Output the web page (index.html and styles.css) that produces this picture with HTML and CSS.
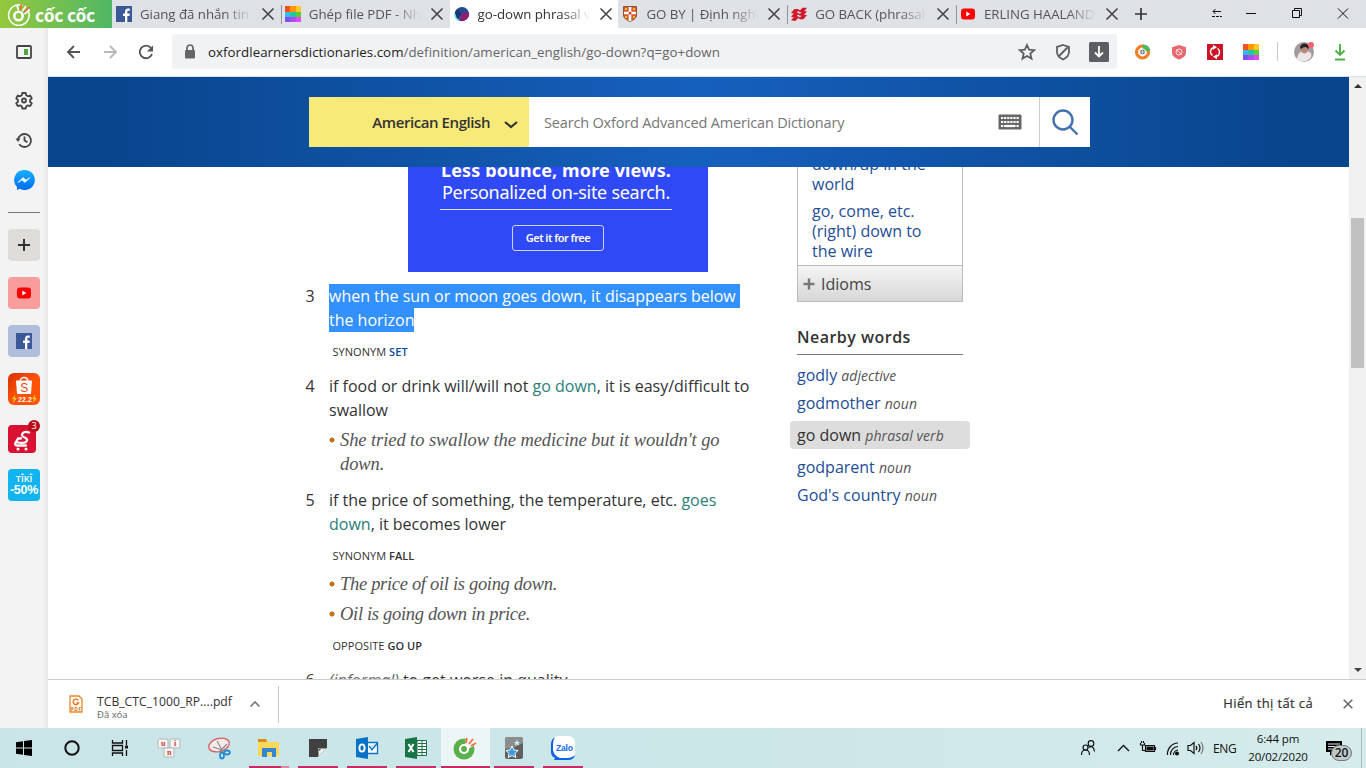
FILE: index.html
```html
<!DOCTYPE html>
<html lang="vi">
<head>
<meta charset="utf-8">
<title>go-down phrasal verb</title>
<link rel="stylesheet" href="styles.css">
</head>
<body>
<svg width="0" height="0" class="defs">
  <defs>
    <linearGradient id="msg" x1="0" y1="0" x2="0" y2="1"><stop offset="0" stop-color="#19b0ff"/><stop offset="1" stop-color="#006cf0"/></linearGradient>
    <symbol id="close" viewBox="0 0 14 14"><path d="M1.5 1.5l11 11M12.5 1.5l-11 11" stroke="currentColor" stroke-width="1.6" fill="none"/></symbol>
    <symbol id="rainbow" viewBox="0 0 16 16"><path fill="#f4511e" d="M0 0h5v6H0z"/><path fill="#ff9800" d="M5 0h6v6H5z"/><path fill="#ffc928" d="M11 0h5v6h-5z"/><path fill="#3bb8ee" d="M0 6h5v5H0z"/><path fill="#1fc9a5" d="M5 6h6v5H5z"/><path fill="#58cf34" d="M11 6h5v5h-5z"/><path fill="#7b4ff2" d="M0 11h5v5H0z"/><path fill="#b04cf4" d="M5 11h6v5H5z"/><path fill="#e34bf0" d="M11 11h5v5h-5z"/></symbol>
    <symbol id="youtube" viewBox="0 0 16 16"><rect x="1" y="2.5" width="14" height="11" rx="3" fill="#f00"/><path d="M6.3 5.6v4.8l4-2.4z" fill="#fff"/></symbol>
    <symbol id="facebook" viewBox="0 0 16 16"><path fill="#3b5998" d="M0 0h16v16H0z"/><path fill="#fff" d="M9 16V10H7V7.5h2V6c0-2.4 1.2-3.5 3.3-3.5h1.5v2.3h-1.2c-1 0-1.3.4-1.3 1.3v1.4h2.5L13.4 10h-2.1v6z"/></symbol>
  </defs>
</svg>

<header class="tabstrip">
  <div class="brand">
    <svg width="24" height="24" viewBox="0 0 24 24"><g fill="none" stroke="#fff"><path d="M15.5 3.5A10.3 10.3 0 1 0 21.500 9.500" stroke-width="1.500"/><circle cx="11.500" cy="14" r="4.200" stroke-width="2.600"/><path d="M11.500 8L10 3.500M15.500 9L19 4M17.500 12l5-4.500" stroke-width="1.800"/></g><path d="M14.500 2l-1.500 6M17 10.500l5.500-5.500" stroke="#f2633e" stroke-width="1.600"/></svg>
    <span class="brand-name">cốc cốc</span>
  </div>
  <div class="tab"><svg class="fav"><use href="#facebook"/></svg><span class="tab-title">Giang đã nhắn tin</span><svg class="x"><use href="#close"/></svg></div>
  <div class="tab sep"><svg class="fav"><use href="#rainbow"/></svg><span class="tab-title">Ghép file PDF - Nh</span><svg class="x"><use href="#close"/></svg></div>
  <div class="tab active"><svg class="fav" viewBox="0 0 16 16"><circle cx="8" cy="8" r="7" fill="#234a93"/><path d="M1.2 6A7 7 0 0 0 5 14.3L8 8z" fill="#32c0e9"/><path d="M8 8L2.7 3.2A7 7 0 0 0 5 14.3c0-2 1-4 3-6.3z" fill="#153673"/><path d="M8 7l6.8-1A7 7 0 0 1 5 14.3z" fill="#8e1e72"/><path d="M1 8a7 7 0 0 0 4 6.3" stroke="#5ed6f4" stroke-width="1.4" fill="none"/></svg><span class="tab-title">go-down phrasal v</span><svg class="x"><use href="#close"/></svg></div>
  <div class="tab"><svg class="fav" viewBox="0 0 16 16"><path fill="#d65b26" stroke="#813b24" stroke-width=".8" d="M1.500.5h13v8.300c0 3.400-3 5.200-6.500 6.700-3.500-1.500-6.500-3.300-6.500-6.700z"/><path stroke="#fff" stroke-width="2.600" d="M8 1v14M2 7h12"/><path fill="#f2bb42" d="M3 2h2v2H3zM11 2h2v2h-2zM3 10h2v2H3zM11 10h2v2h-2z"/><path fill="#c43621" d="M6.800 6h2.500v2.500H6.800z"/></svg><span class="tab-title">GO BY | Định nghĩ</span><svg class="x"><use href="#close"/></svg></div>
  <div class="tab sep"><svg class="fav" viewBox="0 0 18 16"><path d="M0 7L4 2.500h4l2 1.500 3-3h5l-4 5h-4L8 4.500 5 8zM0 11l4-4.500h4L10 8l3-3h5l-4 5h-4L8 8.500 5 12zM0 15l4-4.500h4l2 1.500 3-3h5l-4 5h-4l-2-1.500L5 16z" fill="#d3172b"/></svg><span class="tab-title">GO BACK (phrasal</span><svg class="x"><use href="#close"/></svg></div>
  <div class="tab sep"><svg class="fav"><use href="#youtube"/></svg><span class="tab-title">ERLING HAALAND</span><svg class="x"><use href="#close"/></svg></div>
  <div class="newtab"><svg width="14" height="14" viewBox="0 0 14 14"><path d="M7 1v12M1 7h12" stroke="#333" stroke-width="1.700"/></svg></div>
  <div class="winctl">
    <svg width="150" height="28" viewBox="1206 0 150 28" fill="none" stroke="#111"><path d="M1213 11.500h8M1215.500 9l-2.500 2.500 2.500 2.500"/><path d="M1212 16.500h10" stroke-dasharray="3 1"/><path d="M1246 13.500h10"/><path d="M1292.500 10.500h7v7h-7zM1294.500 10.500v-2h7v7h-2"/><path d="M1338 8.500l10 10M1348 8.500l-10 10"/></svg>
  </div>
</header>

<div class="window">
  <aside class="rail">
    <svg width="48" height="140" viewBox="0 28 48 140" fill="none" stroke="#444" stroke-width="1.800"><rect x="17" y="46" width="14" height="12" rx="1"/><path d="M24 49h4v6h-4z" fill="#4aa834" stroke="none"/>
      <path d="M22.300 93h3.400l.5 2.300 1.800 1 2.200-.8 1.600 2.900-1.700 1.600-.1 1.700 1.800 1.500-1.700 2.900-2.200-.7-1.600.8-.6 2.300h-3.400l-.6-2.300-1.600-.8-2.200.7-1.700-2.900 1.800-1.500-.1-1.700-1.700-1.600 1.600-2.900 2.200.8 1.800-1z" stroke-linejoin="round"/><circle cx="24" cy="100.500" r="2"/>
      <path d="M19.200 144.300A6.500 6.500 0 1 0 18 140"/><path d="M15.500 138.500h5l-2.500 3.500z" fill="#444" stroke="none"/><path d="M24.500 136.500v4l3 1.800"/></svg>
    <svg width="22" height="22" viewBox="0 0 22 22"><path d="M11 1a10 10 0 0 0-7 17v3l3-1.300A10 10 0 1 0 11 1z" fill="url(#msg)"/><path d="M5 13.500l5-5 3 2.500 4-2.500-5 5-3-2.500z" fill="#fff" stroke="#fff" stroke-width=".6"/></svg>
    <hr>
    <div class="tile add"><svg width="14" height="14" viewBox="0 0 14 14"><path d="M7 1v12M1 7h12" stroke="#333" stroke-width="2"/></svg></div>
    <div class="tile yt"><svg width="16" height="16"><use href="#youtube"/></svg></div>
    <div class="tile fb"><svg width="16" height="16"><use href="#facebook"/></svg></div>
    <div class="tile shopee"><svg width="32" height="32" viewBox="0 0 32 32"><path d="M12 9c0-6 8-6 8 0" fill="none" stroke="#fff" stroke-width="1.400"/><path d="M8 7.500h16l-1 13.500H9z" fill="#fff"/><text x="12.300" y="19" font-size="12" fill="#f0431b">S</text><path d="M7 22l-3 4h2l-1 4 4-5H7zM27 22l-3 4h2l-1 4 4-5h-2z" fill="#ffc928"/><text x="10" y="28.500" font-size="7" font-weight="bold" fill="#fff" textLength="14">22.2</text></svg></div>
    <div class="tile sendo"><svg width="28" height="28" viewBox="0 0 28 28"><path d="M21 7.500c-4-1.500-7 0-7 2.500 0 3 6 2 5 5.500-1 3-7 2.500-11 1.500M8 17c-2 3 0 3.500 2 3.500h8M8 17l2-3.500h3" fill="none" stroke="#fff" stroke-width="2.300" stroke-linecap="round" stroke-linejoin="round"/><circle cx="10" cy="24" r="1.500" fill="#fff"/><circle cx="18" cy="24" r="1.500" fill="#fff"/></svg><b>3</b></div>
    <div class="tile tiki"><span>TÎKÎ</span><strong>-50%</strong></div>
  </aside>

  <main class="browser">
    <div class="toolbar">
      <svg width="124" height="48" viewBox="48 28 124 48" fill="none" stroke="#555" stroke-width="1.900"><path d="M80 52H69M74 46l-6 6 6 6"/><path d="M104 52h11M110 46l6 6-6 6" stroke="#b9b9b9"/><path d="M151 48a6.300 6.300 0 1 0 1 6"/><path d="M153 45.500v6h-6z" fill="#555" stroke="none"/></svg>
      <div class="omnibox">
        <svg width="12" height="16" viewBox="0 0 12 16"><path d="M3 6V4a3 3 0 0 1 6 0v2" fill="none" stroke="#666" stroke-width="1.700"/><rect x="1" y="6" width="10" height="8.500" rx="1" fill="#666"/></svg>
        <span class="url"><i>oxfordlearnersdictionaries.com</i>/definition/american_english/go-down?q=go+down</span>
        <svg width="98" height="34" viewBox="1017 35 98 34" fill="none" stroke="#5b5e62" stroke-width="1.800"><path d="M1027 45l2.100 4.700 5.100.5-3.900 3.400 1.200 5-4.500-2.600-4.500 2.600 1.200-5-3.900-3.400 5.100-.5z"/><path d="M1063 45l6 2v5c0 4-3 6-6 7.500-3-1.500-6-3.500-6-7.500v-5zM1058.500 56.500l9-9"/><rect x="1089" y="42" width="20" height="20" rx="1.500" fill="#5b5e62" stroke="none"/><path d="M1099 46v10M1095 52.500l4 4 4-4" stroke="#fff"/></svg>
      </div>
      <svg width="249" height="48" viewBox="1117 28 249 48" fill="none"><circle cx="1142.500" cy="52" r="6" stroke="#f08026" stroke-width="3.200"/><path d="M1142.500 44.500a8 8 0 0 1 8 6l-4 1-4-3z" fill="#55b75b"/><circle cx="1142.500" cy="52" r="3" fill="#687078" stroke="#fff"/><path d="M1142.500 49.500v5M1140 52h5" stroke="#fff" stroke-width=".6"/>
      <path d="M1179 45l7 2.300v4.700c0 4-3 6-7 7.500-4-1.500-7-3.500-7-7.500v-4.700z" fill="#e8686e"/><circle cx="1179" cy="52" r="3" stroke="#fff" stroke-width=".8"/><path d="M1177 50l4 4" stroke="#fff" stroke-width=".8"/>
      <path fill="#cb1527" d="M1207 44h16v16h-16z"/><path d="M1212.500 55.500a4.500 4.500 0 0 1 1-8M1217.500 48.500a4.500 4.500 0 0 1-1 8" stroke="#fff" stroke-width="1.400"/><path d="M1213 44.800l4 2.500-4 2.500zM1217 54.200v5l-4-2.500z" fill="#fff"/>
      <use href="#rainbow" x="1243" y="44" width="16" height="16"/><path d="M1277.500 42v19" stroke="#c7c9cc"/>
      <circle cx="1304" cy="52" r="10" fill="#a39a9d"/><path d="M1297 59c1-5 2-7 6-8h4c4 1 5 3 4 6-3 5-10 6-14 2z" fill="#ece6e6"/><path d="M1301 47h7v4q-3.500 5-7 0z" fill="#b8887b"/><path d="M1300 48c0-6 9-6 9 0l-1 1q-1-2-3-2t-4 2z" fill="#252125"/><circle cx="1311" cy="45" r="3" fill="#f46371"/><path d="M1340 44v10M1335.500 50.500l4.500 4.500 4.500-4.500M1335 59.500h10" stroke="#4faf46" stroke-width="1.900"/></svg>
    </div>

    <div class="viewport">
      <div class="page">
        <div class="oald-head">
          <div class="dict"><span>American English</span><svg width="14" height="9" viewBox="0 0 14 9"><path d="M1 2l6 5 6-5" fill="none" stroke="#333" stroke-width="2.200"/></svg></div>
          <div class="search"><span>Search Oxford Advanced American Dictionary</span><svg width="24" height="16" viewBox="0 0 24 16"><rect x=".5" y=".5" width="23" height="15" rx="1" fill="#666"/><path d="M3 4h18M3 8h18M3 12h18" stroke="#fff" stroke-width="2.200" stroke-dasharray="2.200 .9"/><path d="M7 12h10" stroke="#fff" stroke-width="2.200"/></svg></div>
          <div class="go"><svg width="28" height="28" viewBox="0 0 28 28" fill="none" stroke="#4470ae" stroke-width="2.400"><circle cx="12" cy="12" r="9.500"/><path d="M18.500 18.500l8 8"/></svg></div>
        </div>
        <div class="content">
          <div class="entry">
            <div class="ad"><b>Less bounce, more views.</b><span>Personalized on-site search.</span><hr><em>Get it for free</em></div>
            <div class="sense s3"><span class="num">3</span><p><mark>when the sun or moon goes down, it disappears below </mark><br><mark>the horizon</mark></p></div>
            <div class="xref x3">SYNONYM <b class="link">SET</b></div>
            <div class="sense"><span class="num">4</span><p>if food or drink will/will not <a>go down</a>, it is easy/difficult to<br>swallow</p></div>
            <ul class="ex"><li>She tried to swallow the medicine but it wouldn't go<br>down.</li></ul>
            <div class="sense"><span class="num">5</span><p>if the price of something, the temperature, etc. <a>goes<br>down</a>, it becomes lower</p></div>
            <div class="xref">SYNONYM <b>FALL</b></div>
            <ul class="ex tight"><li>The price of oil is going down.</li><li>Oil is going down in price.</li></ul>
            <div class="xref">OPPOSITE <b>GO UP</b></div>
            <div class="sense"><span class="num">6</span><p><i>(informal)</i> to get worse in quality</p></div>
          </div>
          <div class="side">
            <div class="results">
              <p>down/up in the<br>world</p>
              <p>go, come, etc.<br>(right) down to<br>the wire</p>
              <div class="idioms"><svg width="12" height="12" viewBox="0 0 12 12"><path d="M6 .5v11M.5 6h11" stroke="#777" stroke-width="2.400"/></svg>Idioms</div>
            </div>
            <h3>Nearby words</h3>
            <ul class="nearby">
              <li>godly <i>adjective</i></li><li>godmother <i>noun</i></li><li class="cur">go down <i>phrasal verb</i></li><li>godparent <i>noun</i></li><li>God's country <i>noun</i></li>
            </ul>
          </div>
        </div>
      </div>
      <div class="scroll"><i class="up"></i><i class="thumb"></i><i class="down"></i></div>
    </div>

    <div class="shelf">
      <svg class="pdf" width="14" height="18" viewBox="0 0 14 18"><path d="M1 1h9l3 3v13H1z" fill="#fff9f0" stroke="#e28a2e" stroke-width="1.300"/><path d="M9.300 5.300A2.800 2.800 0 1 0 9.500 8H7.500" fill="none" stroke="#e8702a" stroke-width="1.300"/><text x="1.800" y="15.500" font-size="5" font-weight="bold" fill="#d97917" textLength="10.400">PDF</text></svg>
      <div class="file"><span>TCB_CTC_1000_RP....pdf</span><small>Đã xóa</small></div>
      <svg class="chev" width="12" height="8" viewBox="0 0 12 8"><path d="M1.500 6.500L6 2l4.500 4.500" fill="none" stroke="#777" stroke-width="1.700"/></svg>
      <span class="showall">Hiển thị tất cả</span>
      <svg class="shelf-x" width="12" height="12" viewBox="0 0 14 14"><path d="M2 2l10 10M12 2L2 12" stroke="#6a6a6a" stroke-width="1.900"/></svg>
    </div>
  </main>
</div>

<footer class="taskbar">
  <div class="task start"><svg width="16" height="16" viewBox="0 0 16 16"><path d="M0 2.300L7 1.300v6.200H0zM8 1.100L16 0v7.500H8zM0 8.500h7v6.200l-7-1zM8 8.500h8V16l-8-1.100z"/></svg></div>
  <div class="task start"><svg width="16" height="16" viewBox="0 0 16 16"><circle cx="8" cy="8" r="6.700" fill="none" stroke="#111" stroke-width="2"/></svg></div>
  <div class="task start"><svg width="18" height="16" viewBox="0 0 18 16" fill="none" stroke="#111" stroke-width="1.300"><path d="M1.500 0v3h10V0M1.500 16v-3h10v3M1.500 5.500h10v5h-10zM15.500 0v5M15.500 10v6"/><path d="M14 5.500h3v3h-3z" fill="#111" stroke="none"/></svg></div>
  <div class="task pinned"><svg width="24" height="20" viewBox="0 0 24 20"><g fill="#f5f5f5" stroke="#b5b5b5"><rect x="1" y="1" width="10" height="9" rx="1"/><rect x="13" y="1" width="10" height="9" rx="1"/><rect x="7" y="10" width="10" height="9" rx="1"/></g><g fill="#c63d39" font-size="8" font-weight="bold" font-family="Liberation Serif,serif"><text x="4" y="7.500">u</text><text x="17" y="7.500">i</text><text x="10" y="17">n</text></g></svg></div>
  <div class="task pinned"><svg width="24" height="24" viewBox="0 0 24 24"><ellipse cx="12" cy="9" rx="10.500" ry="6.500" transform="rotate(-15 12 9)" fill="#f4e9eb" stroke="#db5a62" stroke-width="1.300"/><path d="M10 5l6 11M20 8l-7 7M6 11l9 3" stroke="#888" stroke-width="1.100"/><g fill="none" stroke="#278acf" stroke-width="1.800"><ellipse cx="15" cy="19.500" rx="2" ry="3"/><ellipse cx="20" cy="16.500" rx="2.800" ry="2"/></g></svg></div>
  <div class="task open two"><svg width="24" height="20" viewBox="0 0 24 20"><path d="M1 1h8l2 3h11v14H1z" fill="#ffd75b"/><path d="M1 1h8l1 3H1z" fill="#d88d1b"/><path d="M5 19v-9h14v9h-4v-5h-5v5z" fill="#3386d0"/></svg></div>
  <div class="task open"><svg width="18" height="18" viewBox="0 0 18 18"><path d="M0 0h18v18H0z" fill="#404040"/><path d="M9 18V9h9v9z" fill="#d0e8ea"/><path d="M9.500 17.500V9.500h8z" fill="#f4f4f4"/><path d="M9.500 9.500h8l-8 8z" fill="#404040"/><path d="M10 17v-5l2-2h5z" fill="#eee"/></svg></div>
  <div class="task open"><svg width="24" height="24" viewBox="0 0 24 24"><path fill="#0a72c6" d="M1 3l12-2v22L1 21z"/><path d="M13 6.500h9.500v11H13M14 10l3 4 5.500-7" fill="#fff" stroke="#0a72c6" stroke-width="1.300"/><ellipse cx="7" cy="12" rx="2.600" ry="3.600" fill="none" stroke="#fff" stroke-width="1.900"/></svg></div>
  <div class="task open"><svg width="24" height="24" viewBox="0 0 24 24"><path fill="#187346" d="M1 3l12-2v22L1 21z"/><path d="M13 4.500h9.500v15H13z" fill="#fff" stroke="#187346"/><path d="M14 7.500h8M14 10.500h8M14 13.500h8M14 16.500h8M18 5v14" stroke="#187346"/><path d="M4.500 8l5 8M9.500 8l-5 8" stroke="#fff" stroke-width="2"/></svg></div>
  <div class="task open current"><svg width="24" height="24" viewBox="0 0 24 24"><circle cx="11" cy="13" r="10.500" fill="#5bb04b"/><path d="M12 10L13 0l4 2 3 3 4 3-9 5z" fill="#f4f9f8"/><circle cx="11" cy="13" r="4" fill="#5bb04b" stroke="#fff" stroke-width="2.200"/><path d="M13 7l1-5M16 8l4-5M18 10l5-3" stroke="#f36c3d" stroke-width="1.800"/></svg></div>
  <div class="task open"><svg width="20" height="24" viewBox="0 0 20 24"><rect x="1" y="1" width="18" height="22" rx="2.500" fill="#5f5f5f"/><path d="M1 13Q11 12 19 7V3.500Q19 1 16.500 1h-13Q1 1 1 3.500z" fill="#8d8d8d"/><path d="M8 10l2 4 4 .5-3 3 .8 4L8 19.500 4.200 21.500l.8-4-3-3L6 14z" fill="#399be0" stroke="#fff"/><path d="M13 3.500l1 2.500h2l-1.500 1.500.5 2-2-1-2 1 .5-2L10 6h2z" fill="#d7e9f5"/></svg></div>
  <div class="task open"><svg width="24" height="24" viewBox="0 0 24 24"><path d="M7 0h10q7 0 7 7v10q0 7-7 7H3q1-1 1-2-4-2-4-7V7Q0 0 7 0z" fill="#fff"/><path d="M4 1Q0 3 0 8v8q0 4 4 6l-1 2h14q6 0 7-5-3 3-8 3H9q-6-2-7-8V8q0-4 2-7z" fill="#0d62e8"/><text x="5" y="14.500" font-size="8.500" font-weight="bold" fill="#126af0" textLength="17">Zalo</text></svg></div>
  <div class="tray">
    <svg width="126" height="40" viewBox="1077 728 126 40" fill="none" stroke="#111" stroke-width="1.200"><circle cx="1090" cy="743.500" r="2.800"/><circle cx="1084.500" cy="747.500" r="2.500"/><path d="M1080.500 755q0-5 4-5t4 5M1087.500 747.500q5-3 6 4"/><path d="M1117 751l5.500-5.500 5.500 5.500" stroke-width="1.400"/><path d="M1144.500 745.500h9v6h-9z"/><path d="M1146 747h6v3h-6z" fill="#111"/><path d="M1154.500 747v3M1139.500 743v2h4v-2M1140.500 741v2M1142.500 741v2M1141.500 745v5.500h3"/><path d="M1166.500 755A11 11 0 0 1 1177 743M1169.500 755a8 8 0 0 1 7.500-8.500M1172.500 755a5 5 0 0 1 4.500-5"/><circle cx="1176" cy="753.500" r="1.400" fill="#111"/><path d="M1187 745.500h2.500l3.500-3v11l-3.500-3H1187z"/><path d="M1195 746q1.700 2 0 4M1197.500 744q3 4 0 8" /><path d="M1200 742q4 6 0 12" stroke="#777"/></svg>
    <span class="eng">ENG</span>
    <div class="clock"><span>6:44 pm</span><span>20/02/2020</span></div>
    <div class="notif"><svg width="16" height="15" viewBox="0 0 16 15"><path d="M0 0h16v11H7l-3 4v-4H0z"/><path d="M2 3h12M2 5.500h12M2 8h8" stroke="#d5e9ea"/></svg><b>20</b></div>
    <i class="peek"></i>
  </div>
</footer>
</body>
</html>
```

FILE: styles.css
```css
* { box-sizing: border-box; }
body { margin: 0; width: 1366px; height: 768px; overflow: hidden; display: flex; flex-direction: column; background: #fff; font-family: "Open Sans", "Noto Sans", sans-serif; color: #333; }
svg { display: block; flex: none; }
.defs { position: absolute; }
p, ul, h3 { margin: 0; padding: 0; font-weight: normal; }
li { list-style: none; }

.tabstrip { height: 28px; display: flex; background: #dee1e6; flex: none; }
.brand { width: 112px; display: flex; align-items: center; gap: 4px; padding-left: 7px; background: linear-gradient(90deg, #95c83d, #50b765); }
.brand-name { font: bold 17.500px/26px "Noto Sans", sans-serif; color: #fff; letter-spacing: -.4px; padding-top: 2px; white-space: nowrap; }
.tab { width: 168.800px; display: flex; align-items: center; padding-left: 4px; color: #555; flex: none; }
.tab.sep { background: linear-gradient(#8f9296, #8f9296) 0 5px / 1px 19px no-repeat; }
.tab.active { background: #fff; color: #333; }
.fav { width: 16px; height: 16px; }
.tab-title { width: 118px; margin-left: 8px; font-size: 13.300px; letter-spacing: -.05px; line-height: 28px; white-space: nowrap; overflow: hidden; -webkit-mask-image: linear-gradient(90deg, #000 84px, transparent 112px); mask-image: linear-gradient(90deg, #000 84px, transparent 112px); }
.x { width: 14px; height: 14px; margin-left: 3px; color: #444; }
.newtab { padding: 7px 0 0 9px; flex: 1; }
.winctl { width: 160px; }

.window { height: 700px; display: flex; flex: none; }
.rail { width: 48px; background: linear-gradient(90deg, #f3f3f3 43px, #e8e8e8); display: flex; flex-direction: column; align-items: center; flex: none; }
.rail > svg:first-child { margin-bottom: 1px; }
.rail hr { width: 32px; height: 1px; margin: 21px 0 16px; border: 0; background: #777; }
.tile { width: 32px; height: 32px; margin-bottom: 16px; border-radius: 4px; display: flex; align-items: center; justify-content: center; flex: none; }
.add { background: #dfddda; }
.yt { background: #f89c9c; }
.fb { background: #b1bedb; }
.shopee { background: linear-gradient(135deg, #d73005, #ff5208 50%); font-family: "Liberation Sans", sans-serif; border-radius: 6px; }
.sendo { width: 28px; height: 28px; margin: 4px 4px 16px 0; background: #d91133; position: relative; }
.sendo b { position: absolute; top: -5px; right: -4px; width: 12px; height: 12px; border-radius: 50%; background: #b90c1b; color: #fff; font: 9px/12px "Open Sans", sans-serif; text-align: center; }
.tiki { flex-direction: column; background: #12b4ef; color: #fff; }
.tiki span { font-size: 9px; line-height: 11px; font-weight: 600; }
.tiki strong { font: bold 12.500px/13px "Liberation Sans", sans-serif; letter-spacing: -.3px; }

.browser { width: 1318px; display: flex; flex-direction: column; }
.toolbar { height: 49px; display: flex; flex: none; border-bottom: 1px solid #d7e3ee; }
.omnibox { width: 945px; height: 35px; margin-top: 6px; padding: 0 2px 0 12px; display: flex; align-items: center; background: #f1f2f4; border-radius: 3px; flex: none; }
.url { flex: 1; margin-left: 12px; font-size: 13.300px; letter-spacing: .04px; color: #666; white-space: nowrap; }
.url i { font-style: normal; color: #222; }

.viewport { height: 602px; display: flex; flex: none; }
.page { width: 1301px; display: flex; flex-direction: column; overflow: hidden; }
.oald-head { height: 90px; padding: 20px 0 20px 261px; display: flex; flex: none; background: linear-gradient(90deg, #09458d 0, #09458d 60px, #1660bd 50%, #09458d 1240px); position: relative; z-index: 1; }
.dict { width: 220px; background: #f7ea79; display: flex; align-items: center; justify-content: flex-end; padding-right: 11px; gap: 14px; font-size: 15px; letter-spacing: -.43px; font-weight: 600; white-space: nowrap; }
.dict svg { margin-top: 4px; }
.search { width: 510px; background: #fff; padding: 0 17px 0 15px; display: flex; align-items: center; justify-content: space-between; font-size: 14.500px; letter-spacing: -.17px; color: #777; }
.go { width: 51px; background: #fff; border-left: 1px solid #ccc; display: flex; align-items: center; justify-content: center; }
.content { height: 512px; display: flex; overflow: hidden; }
.entry { width: 459px; margin-left: 257px; flex: none; }
.ad { width: 300px; height: 105px; margin-left: 103px; padding: 0 36px 0 32px; background: #3049f6; color: #fff; display: flex; flex-direction: column; }
.ad b { font: bold 18px/24px "Noto Sans", sans-serif; letter-spacing: .13px; margin: -9px 0 0 1px; white-space: nowrap; }
.ad > span { font: 18px/20px "Noto Sans", sans-serif; letter-spacing: -.28px; margin-left: 2px; white-space: nowrap; }
.ad hr { width: 100%; height: 1px; border: 0; background: #dfe3ff; margin: 7px 0 15px; }
.ad em { width: 92px; height: 26px; margin-left: 72px; border: 1px solid #ccd3ff; border-radius: 3px; font: 600 10.500px/23px "Noto Sans", sans-serif; letter-spacing: -.5px; word-spacing: -.3px; letter-spacing: -.45px; text-align: center; font-size: 11px; }
.sense { display: flex; height: 48px; margin-top: 12px; font-size: 16px; line-height: 24px; white-space: nowrap; }
.num { width: 24px; padding-left: .5px; }
.sense a { color: #2b8079; }
.sense i { color: #666; }
mark { display: inline-block; height: 24px; background: #3390ff; color: #fff; white-space: pre; letter-spacing: -.015px; }
.sense p { width: 425px; }
.xref { height: 20px; margin: 10px 0 0 27.500px; font-size: 11px; letter-spacing: .05px; line-height: 20px; color: #333; white-space: nowrap; }
.xref b { font-weight: 600; }
.xref .link { color: #104a93; }
.ex { margin: 6px 0 0 24px; color: #555; font: italic 18.500px/24px "Liberation Serif", serif; letter-spacing: -.08px; white-space: nowrap; }
.ex li { padding-left: 11px; background: radial-gradient(circle at 3px 12px, #c4761b 2.300px, transparent 2.800px); }
.tight { letter-spacing: -.31px; }
.tight li + li { margin-top: 6px; }

.side { width: 180px; margin-left: 26px; font-size: 16px; }
.results { width: 166px; margin-left: 7px; height: 148px; padding: 0 0 0 14px; border: 1px solid #bbb; border-top: 0; color: #1d4e97; line-height: 20px; white-space: nowrap; }
.results p:first-child { margin-top: -13px; }
.results p + p { margin-top: 7px; }
.idioms { width: 164px; height: 36px; margin: 4px 0 0 -14px; padding-left: 5px; display: flex; align-items: center; gap: 6px; color: #444; background: linear-gradient(#f5f5f5, #d7d7d7); border-top: 1px solid #bbb; }
.side h3 { width: 166px; height: 34px; margin: 19px 0 6px 7px; border-bottom: 1px solid #777; font-size: 16px; letter-spacing: .48px; line-height: 32px; font-weight: 600; }
.nearby li { height: 28px; padding-left: 7px; line-height: 28px; color: #1d4e97; white-space: nowrap; }
.nearby i { font-size: 14px; letter-spacing: .07px; color: #555; }
.nearby .cur { margin: 4px 0 4px; background: #ddd; border-radius: 4px; color: #333; }
.scroll { width: 17px; background: #f1f1f1; display: flex; flex-direction: column; align-items: center; }
.up, .down { border: 4px solid transparent; }
.up { border-bottom-color: #333; margin-top: 3px; }
.down { border-top-color: #444; margin-top: auto; margin-bottom: 3px; }
.thumb { width: 13px; height: 150px; margin-top: 130px; background: #c1c1c1; }

.shelf { height: 49px; border-top: 1px solid #ccc; display: flex; align-items: center; background: linear-gradient(#c8c8c8, #c8c8c8) 230px 6px / 1px 37px no-repeat, #fff; }
.pdf { margin-left: 21px; }
.file { width: 147px; margin: 6px 0 0 14px; font-size: 12.200px; display: flex; flex-direction: column; white-space: nowrap; }
.file span { line-height: 14px; }
.file small { font-size: 9.500px; line-height: 11px; color: #666; }
.chev { margin-left: 5px; }
.showall { margin: -3px 0 0 auto; font-size: 13px; letter-spacing: .37px; -webkit-text-stroke: .2px #333; }
.shelf-x { margin: 0 12px 0 29px; }

.taskbar { height: 40px; display: flex; background: linear-gradient(90deg, #c9e5e8, #cde7e9 60%, #d5ebec); flex: none; }
.task { width: 49px; display: flex; align-items: center; justify-content: center; flex: none; font-family: "Liberation Sans", sans-serif; }
.start { width: 48px; }
.pinned { width: 50.250px; }
.open { background: linear-gradient(#c42d62, #c42d62) 50% 100% / 40px 2px no-repeat; }
.two { background: linear-gradient(90deg, #c42d62 32px, #dc88a5 32px) 50% 100% / 40px 2px no-repeat; }
.current { background: linear-gradient(#c42d62, #c42d62) 0 100% / 49px 2px no-repeat, #edf6f7; }
.tray { margin-left: auto; display: flex; align-items: center; color: #111; font-size: 12px; white-space: nowrap; }
.eng { width: 34px; margin-left: 9px; letter-spacing: -.3px; }
.clock { width: 62px; text-align: center; display: flex; flex-direction: column; line-height: 18px; font-size: 11.500px; letter-spacing: -.15px; }
.notif { width: 44px; padding-left: 17px; position: relative; }
.notif b { position: absolute; left: 22px; top: 4px; width: 21px; height: 16px; border: 1px solid #777; border-radius: 8px; background: #bdc9ca; font: 600 12px/14px "Open Sans", sans-serif; text-align: center; }
.peek { width: 1px; height: 40px; margin: 0 4px 0 8px; background: #a9c0c2; }
```
